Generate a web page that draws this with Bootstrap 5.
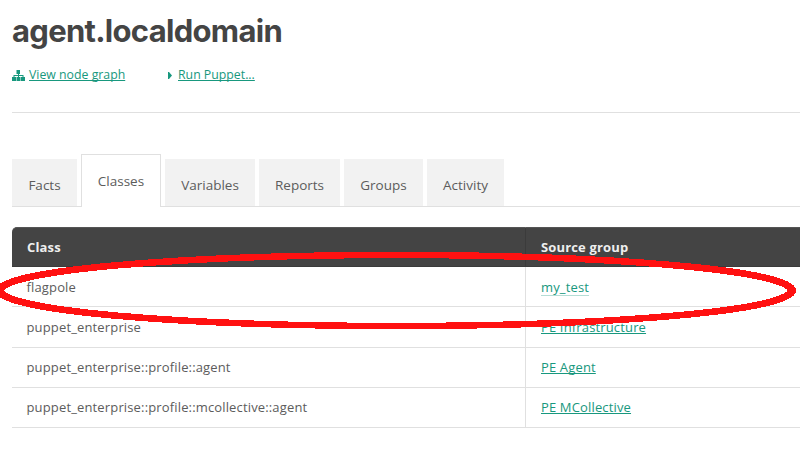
<!DOCTYPE html>
<html lang="en">
<head>
<meta charset="utf-8">
<title>agent.localdomain</title>
<meta name="viewport" content="width=device-width, initial-scale=1">
<link href="https://cdn.jsdelivr.net/npm/bootstrap@5.3.0/dist/css/bootstrap.min.css" rel="stylesheet">
<style>
body{font-family:"Open Sans","Noto Sans",sans-serif;font-size:13px;line-height:20px;color:#5c5c5c;background:#fff;height:471px}
.node-page{padding-left:12px;height:471px}
.node-title{font-family:Inter,Roboto,sans-serif;font-weight:700;font-size:31px;line-height:40px;color:#444;letter-spacing:-.7px;padding-top:11px}
a,a:hover{color:#18987e;text-underline-offset:1px;text-decoration-thickness:1px;text-decoration-skip-ink:none}
.node-actions{padding-top:14px;height:62px;border-bottom:1px solid #e0e0e0;font-size:12.3px}
.act-graph{width:155px}
.nav-tabs{height:53px;margin-top:41px;border-bottom:1px solid #e0e0e0;font-size:13.5px;gap:4px}
.nav-tabs .nav-link{border:0;border-radius:0;margin:0;padding:4px 0 0;height:47px;background:#f2f2f2;color:#5c5c5c;display:flex;align-items:center;justify-content:center}
.nav-tabs .nav-link.active{border:1px solid #e0e0e0;border-bottom:0;height:53px;background:#fff;padding:0 0 1px;color:#5c5c5c;margin-bottom:-1px}
.w-facts{width:65px}.w-classes{width:80px}.w-vars{width:90px}.w-reports{width:81px}.w-groups{width:79px}.w-act{width:77px}
.class-table{margin-top:20px;width:788px;table-layout:fixed;border-collapse:separate;border-spacing:0;color:#5c5c5c;letter-spacing:.15px}
.class-table th,.class-table td{height:40px;padding:0 15px;vertical-align:middle;border-bottom:1px solid #e0e0e0;line-height:20px}
.class-table th{background:#444;color:#eee;font-weight:700;border-bottom-color:#3b3b3b;border-top:1px solid #555}
.class-table th:first-child{width:514px;border-top-left-radius:5px;border-right:1px solid #3b3b3b}
.class-table td:first-child{border-right:1px solid #e0e0e0;padding-left:14.500px}
.class-table .tall td{height:41px}
.class-table tr:nth-child(n+3) td{padding-bottom:1px}
.class-table .soft-link{text-underline-offset:3px;text-decoration-color:#b5ddd5}
.red-ring{left:0;top:240px}
</style>
</head>
<body class="overflow-hidden">
<main class="node-page position-relative">
  <h1 class="node-title mb-0">agent.localdomain</h1>
  <div class="node-actions d-flex">
    <div class="act-graph d-flex">
      <svg class="flex-shrink-0" width="13" height="20" viewBox="0 0 13 20" fill="#18987e"><path d="M4.500 5H8v4H7v1h4.500v2H13v4H9v-4h1.500v-1H7v1h1.500v4h-4v-4H6v-1H2.500v1H4v4H0v-4h1.500v-2H6V9H4.500z"/></svg>
      <a href="#" class="ms-1 text-nowrap">View node graph</a>
    </div>
    <div class="d-flex">
      <svg class="flex-shrink-0" width="11" height="20" viewBox="0 0 11 20" fill="#18987e"><path d="M1 7h1l3 3.500-3 3.500h-1z"/></svg>
      <a href="#" class="text-nowrap">Run Puppet...</a>
    </div>
  </div>
  <ul class="nav nav-tabs flex-nowrap align-items-end">
    <li class="nav-item"><a class="nav-link w-facts" href="#">Facts</a></li>
    <li class="nav-item"><a class="nav-link active w-classes" href="#">Classes</a></li>
    <li class="nav-item"><a class="nav-link w-vars" href="#">Variables</a></li>
    <li class="nav-item"><a class="nav-link w-reports" href="#">Reports</a></li>
    <li class="nav-item"><a class="nav-link w-groups" href="#">Groups</a></li>
    <li class="nav-item"><a class="nav-link w-act" href="#">Activity</a></li>
  </ul>
  <table class="class-table">
    <thead><tr><th>Class</th><th>Source group</th></tr></thead>
    <tbody>
      <tr><td>flagpole</td><td><a href="#" class="soft-link">my_test</a></td></tr>
      <tr class="tall"><td>puppet_enterprise</td><td><a href="#">PE Infrastructure</a></td></tr>
      <tr><td>puppet_enterprise::profile::agent</td><td><a href="#">PE Agent</a></td></tr>
      <tr><td>puppet_enterprise::profile::mcollective::agent</td><td><a href="#">PE MCollective</a></td></tr>
    </tbody>
  </table>
  <svg class="red-ring position-absolute pe-none" width="800" height="100" viewBox="0 240 800 100" shape-rendering="crispEdges" fill="none" stroke="#f11" stroke-width="6.400"><ellipse cx="394.500" cy="290.500" rx="396" ry="35.500"/><ellipse cx="397" cy="290.500" rx="396" ry="35.500"/></svg>
</main>
<script src="https://cdn.jsdelivr.net/npm/bootstrap@5.3.0/dist/js/bootstrap.bundle.min.js"></script>
</body>
</html>
